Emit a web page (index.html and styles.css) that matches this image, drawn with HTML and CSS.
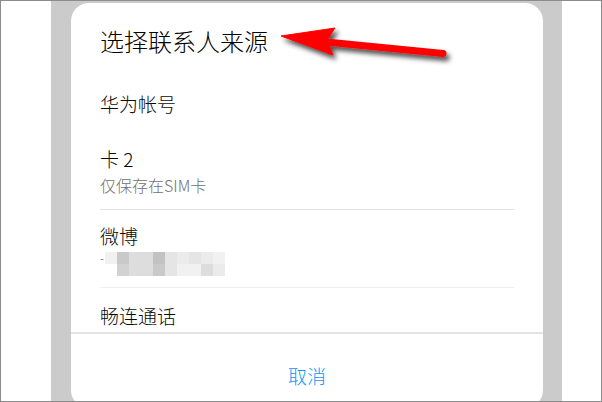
FILE: index.html
```html
<!DOCTYPE html>
<html lang="zh-CN">

<head>
    <meta charset="UTF-8">
    <meta name="viewport" content="width=device-width, initial-scale=1.0">
    <title>选择联系人来源</title>
    <link rel="stylesheet" href="styles.css">
</head>

<body>
    <div class="frame">
        <div class="screen">
            <div class="dialog">
                <div class="dialog-title">选择联系人来源</div>

                <div class="source-item single">华为帐号</div>

                <div class="source-item">
                    <div class="item-name">卡 2</div>
                    <div class="item-note">仅保存在SIM卡</div>
                </div>
                <div class="divider"></div>

                <div class="source-item weibo">
                    <div class="item-name">微博</div>
                    <div class="mosaic">
                        <div class="mosaic-row">
                            <span class="dash">-</span>
                            <span class="px g6"></span>
                            <span class="px g1"></span>
                            <span class="px g3"></span>
                            <span class="px g3"></span>
                            <span class="px g0"></span>
                            <span class="px g4"></span>
                            <span class="px g5"></span>
                            <span class="px g4"></span>
                            <span class="px g5"></span>
                            <span class="px g6"></span>
                        </div>
                        <div class="mosaic-row second">
                            <span class="px g2"></span>
                            <span class="px g3"></span>
                            <span class="px g3"></span>
                            <span class="px g1"></span>
                            <span class="px g4"></span>
                            <span class="px g6"></span>
                            <span class="px g6"></span>
                            <span class="px g3"></span>
                            <span class="px g5"></span>
                        </div>
                    </div>
                </div>
                <div class="divider light"></div>

                <div class="source-item last">畅连通话</div>

                <div class="dialog-footer">
                    <span class="cancel-btn">取消</span>
                </div>
            </div>
        </div>

        <!-- red annotation arrow pointing at the title -->
        <svg class="arrow" width="602" height="402" viewBox="0 0 602 402">
            <defs>
                <filter id="shadow" x="-20%" y="-50%" width="140%" height="200%">
                    <feDropShadow dx="3" dy="4" stdDeviation="2.4" flood-color="#000" flood-opacity="0.7" />
                </filter>
            </defs>
            <g filter="url(#shadow)" fill="#ff0000" stroke="#ff0000">
                <line x1="326" y1="42" x2="443" y2="53.5" stroke-width="7" stroke-linecap="round" />
                <polygon points="281,36 335,28 327,40 333,55" stroke-width="1" stroke-linejoin="round" />
            </g>
        </svg>
    </div>
</body>

</html>
```

FILE: styles.css
```css
body {
    margin: 0;
    padding: 0;
    background-color: #fff;
    font-family: "Noto Sans CJK SC", "Noto Sans", sans-serif;
}

.frame {
    position: relative;
    width: 602px;
    height: 402px;
    box-sizing: border-box;
    border: 1px solid #8c8c8c;
    background-color: #fff;
    overflow: hidden;
}

.screen {
    margin-left: 50px;
    width: 511px;
    height: 100%;
    background-color: #cbcbcb;
    padding-top: 2px;
    box-sizing: border-box;
    display: flex;
    flex-direction: column;
}

.dialog {
    margin: 0 19px 0 20px;
    background-color: #fff;
    border-radius: 18px;
    height: 405px;
    flex-shrink: 0;
    display: flex;
    flex-direction: column;
    font-weight: 300;
}

.dialog-title {
    height: 76px;
    line-height: 76px;
    padding-left: 29px;
    font-size: 24px;
    color: #000;
}

.source-item {
    padding: 19px 29px 12px;
    color: #080808;
}

.source-item.single {
    height: 49px;
    line-height: 49px;
    padding: 0 29px;
    font-size: 19px;
}

.item-name {
    font-size: 19px;
    line-height: 24px;
}

.item-note {
    margin-top: 2px;
    font-size: 16px;
    line-height: 24px;
    color: #707070;
}

.divider {
    height: 1px;
    margin: 0 29px;
    background-color: #e4e4e4;
}

.divider.light {
    background-color: #f0f0f0;
}

.source-item.weibo {
    padding: 14px 29px 11px;
}

.mosaic {
    margin-top: 4px;
    display: flex;
    flex-direction: column;
}

.mosaic-row {
    display: flex;
    align-items: center;
    height: 12px;
}

.mosaic-row.second {
    padding-left: 17px;
}

.dash {
    width: 5px;
    font-size: 12px;
    line-height: 12px;
    color: #555;
}

.px {
    width: 12px;
    height: 12px;
}

.g0 { background-color: #c2c2c2; }
.g1 { background-color: #c9c9c9; }
.g2 { background-color: #d2d2d2; }
.g3 { background-color: #dddddd; }
.g4 { background-color: #e5e5e5; }
.g5 { background-color: #ebebeb; }
.g6 { background-color: #f1f1f1; }

.source-item.last {
    padding: 16px 29px 4px;
    font-size: 19px;
    line-height: 24px;
}

.dialog-footer {
    border-top: 2px solid #e3e3e3;
    padding-top: 30px;
    display: flex;
    justify-content: center;
}

.cancel-btn {
    font-size: 19px;
    line-height: 24px;
    color: #0f98f0;
    cursor: pointer;
}

.arrow {
    position: absolute;
    left: -1px;
    top: -1px;
    pointer-events: none;
}
```
